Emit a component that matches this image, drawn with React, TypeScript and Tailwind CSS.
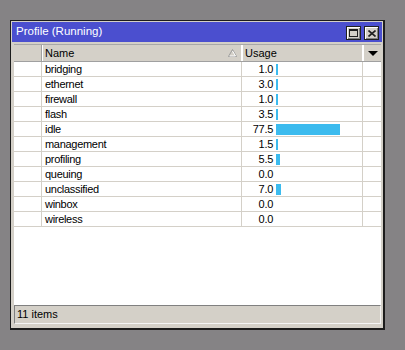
import React from "react";

const rows: [string, number][] = [
  ["bridging", 1.0],
  ["ethernet", 3.0],
  ["firewall", 1.0],
  ["flash", 3.5],
  ["idle", 77.5],
  ["management", 1.5],
  ["profiling", 5.5],
  ["queuing", 0.0],
  ["unclassified", 7.0],
  ["winbox", 0.0],
  ["wireless", 0.0],
];

function barWidth(v: number) {
  if (v <= 0) return 0;
  return Math.max(2, Math.floor(v * 0.83));
}

export default function App() {
  return (
    <div
      className="w-[405px] h-[350px] bg-[#858385] pt-[20px] pl-[10px] overflow-hidden"
      style={{ fontFamily: '"Liberation Sans", Arial, sans-serif' }}
    >
      <div className="w-[375px] border-l border-t border-r-2 border-b-2 border-[#1c1c1c] bg-[#d4d0c8] p-px flex flex-col">
        {/* Title bar */}
        <div className="h-[20px] bg-[#4b4fcf] flex items-center pl-[4px] pr-[3px]">
          <span className="text-white text-[11.5px] leading-none flex-1">Profile (Running)</span>
          <div className="flex items-center gap-[3px] mt-[2px]">
            <div className="w-[15px] h-[14px] bg-[#d4d0c8] border border-[#202020] flex items-center justify-center shadow-[inset_1px_1px_0_#fff,inset_-1px_-1px_0_#808080]">
              <div className="w-[9px] h-[8px] border border-[#202020] border-t-2" />
            </div>
            <div className="w-[15px] h-[14px] bg-[#d4d0c8] border border-[#202020] flex items-center justify-center shadow-[inset_1px_1px_0_#fff,inset_-1px_-1px_0_#808080]">
              <svg width="8" height="7" viewBox="0 0 8 7">
                <path d="M0.5 0.5 L7.5 6.5 M7.5 0.5 L0.5 6.5" stroke="#202020" strokeWidth="1.6" />
              </svg>
            </div>
          </div>
        </div>

        {/* Table */}
        <div className="mt-[2px] ml-[2px] mr-px flex flex-col">
          {/* Header */}
          <div className="h-[17px] flex text-[11px] text-black border-t border-[#a8a8a8] bg-[#d4d0c8]">
            <div className="w-[28px] border-r border-[#a0a0a0]" />
            <div className="w-[200px] border-l border-white border-r border-[#a0a0a0] flex items-center pl-[2px] relative">
              <span>Name</span>
              <svg className="absolute right-[4px] top-[4px]" width="9" height="8" viewBox="0 0 9 8">
                <path d="M4.5 0.5 L8.5 7.5 L0.5 7.5 Z" fill="none" stroke="#9a9a9a" strokeWidth="1" />
                <path d="M1.5 7 L7.5 7 L4.5 2" fill="none" stroke="#ffffff" strokeWidth="1" />
              </svg>
            </div>
            <div className="w-[121px] border-l border-white border-r border-[#a0a0a0] flex items-center pl-[2px]">
              <span>Usage</span>
            </div>
            <div className="flex-1 border-l border-white flex items-center justify-center">
              <svg width="10" height="5" viewBox="0 0 10 5">
                <path d="M0 0 L10 0 L5 5 Z" fill="#000" />
              </svg>
            </div>
          </div>

          {/* Body */}
          <div className="h-[244px] bg-white border-t border-[#a0a0a0] flex flex-col">
            {rows.map(([name, v]) => (
              <div key={name} className="h-[15px] flex border-b border-[#d4d0c8] text-[11px] text-black leading-none">
                <div className="w-[28px] border-r border-[#d4d0c8]" />
                <div className="w-[200px] border-r border-[#d4d0c8] flex items-center pl-[3px] tracking-[-0.3px]">
                  {name}
                </div>
                <div className="w-[121px] border-r border-[#d4d0c8] flex items-center">
                  <span className="w-[31px] text-right tracking-[-0.3px]">{v.toFixed(1)}</span>
                  {barWidth(v) > 0 && (
                    <div className="ml-[3px] h-[11px] bg-[#3cbbee]" style={{ width: barWidth(v) }} />
                  )}
                </div>
                <div className="flex-1" />
              </div>
            ))}
          </div>

          {/* Status bar */}
          <div className="h-[19px] border-t border-l border-[#808080] border-b border-r border-b-[#f4f4f4] border-r-[#f4f4f4] flex items-center pl-[2px] text-[11px] text-black">
            11 items
          </div>
        </div>
        <div className="h-[3px]" />
      </div>
    </div>
  );
}
